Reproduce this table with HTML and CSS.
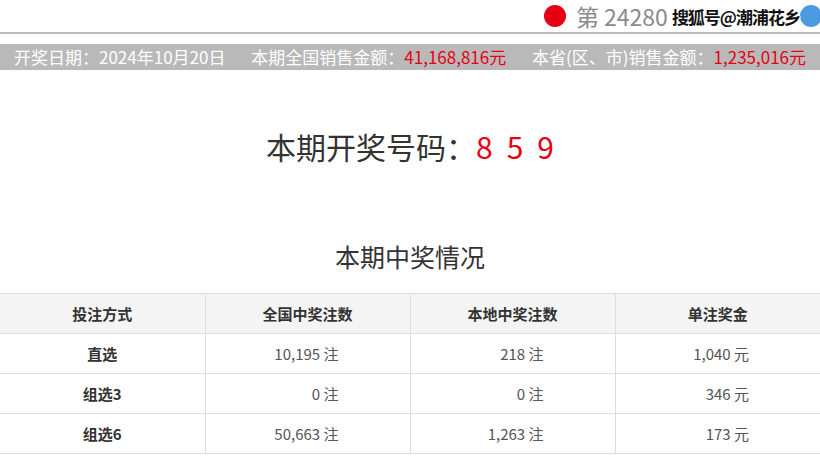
FILE: index.html
```html
<!DOCTYPE html>
<html lang="zh-CN">
<head>
  <meta charset="UTF-8" />
  <title>开奖公告</title>
  <meta name="viewport" content="width=device-width,initial-scale=1" />
  <link rel="stylesheet" href="styles.css">
</head>
<body>
  <div class="topbar">
    <span class="dot red"></span>
    <span class="issue">第 24280</span>
    <span class="mark">搜狐号@潮浦花乡</span>
    <span class="dot blue"></span>
  </div>

  <div class="info">
    <span>开奖日期：2024年10月20日</span>
    <span class="sep">本期全国销售金额：<em>41,168,816元</em></span>
    <span class="sep">本省(区、市)销售金额：<em>1,235,016元</em></span>
  </div>

  <h1 class="result">本期开奖号码：<span class="num">8</span><span class="num">5</span><span class="num last">9</span></h1>

  <h2 class="subtitle">本期中奖情况</h2>

  <table class="prizes">
    <thead>
      <tr>
        <th>投注方式</th>
        <th>全国中奖注数</th>
        <th>本地中奖注数</th>
        <th>单注奖金</th>
      </tr>
    </thead>
    <tbody>
      <tr>
        <td class="kind">直选</td>
        <td>10,195 注</td>
        <td>218 注</td>
        <td>1,040 元</td>
      </tr>
      <tr>
        <td class="kind">组选3</td>
        <td>0 注</td>
        <td>0 注</td>
        <td>346 元</td>
      </tr>
      <tr>
        <td class="kind">组选6</td>
        <td>50,663 注</td>
        <td>1,263 注</td>
        <td>173 元</td>
      </tr>
    </tbody>
  </table>
</body>
</html>
```

FILE: styles.css
```css
body {
  margin: 0;
  overflow: hidden;
  background: #fff;
  font-family: "Noto Sans CJK SC", "Noto Sans", sans-serif;
  color: #333;
}
.topbar {
  display: flex;
  align-items: center;
  justify-content: flex-end;
  height: 32px;
  border-bottom: 2px solid #bbb;
  white-space: nowrap;
}
.dot {
  display: inline-block;
  width: 22px;
  height: 22px;
  border-radius: 50%;
}
.dot.red {
  background: #e60012;
  margin-right: 10px;
}
.dot.blue {
  background: #4a9be0;
  margin-right: -2px;
}
.issue {
  font-size: 23px;
  color: #8a8a8a;
}
.mark {
  margin-left: 4px;
  font-size: 17px;
  font-weight: bold;
  color: #111;
  letter-spacing: -1px;
  text-shadow: 1px 0 #fff, -1px 0 #fff, 0 1px #fff, 0 -1px #fff;
  position: relative;
  z-index: 1;
}
.info {
  margin-top: 10px;
  height: 26px;
  line-height: 26px;
  padding-left: 14px;
  background: #b9b9b9;
  color: #fff;
  font-size: 17px;
  white-space: nowrap;
}
.info .sep {
  margin-left: 22px;
}
.info em {
  font-style: normal;
  color: #e60012;
}
.result {
  margin: 56px 0 0;
  text-align: center;
  font-size: 30px;
  font-weight: normal;
  line-height: 40px;
  color: #333;
}
.num {
  color: #e60012;
  margin-right: 14px;
}
.num.last {
  margin-right: 0;
}
.subtitle {
  margin: 72px 0 0;
  text-align: center;
  font-size: 25px;
  font-weight: normal;
  line-height: 36px;
  color: #333;
}
.prizes {
  width: 100%;
  margin-top: 19px;
  border-collapse: collapse;
  table-layout: fixed;
  font-size: 15px;
}
.prizes th, .prizes td {
  height: 39px;
  padding: 0;
  border: 1px solid #ddd;
}
.prizes th:first-child, .prizes td:first-child {
  border-left: none;
}
.prizes th:last-child, .prizes td:last-child {
  border-right: none;
}
.prizes th {
  background: #f4f4f4;
  color: #333;
  font-weight: bold;
  text-align: center;
}
.prizes td {
  text-align: right;
  padding-right: 71px;
  color: #555;
}
.prizes td.kind {
  text-align: center;
  padding-right: 0;
  color: #333;
  font-weight: bold;
}
```
